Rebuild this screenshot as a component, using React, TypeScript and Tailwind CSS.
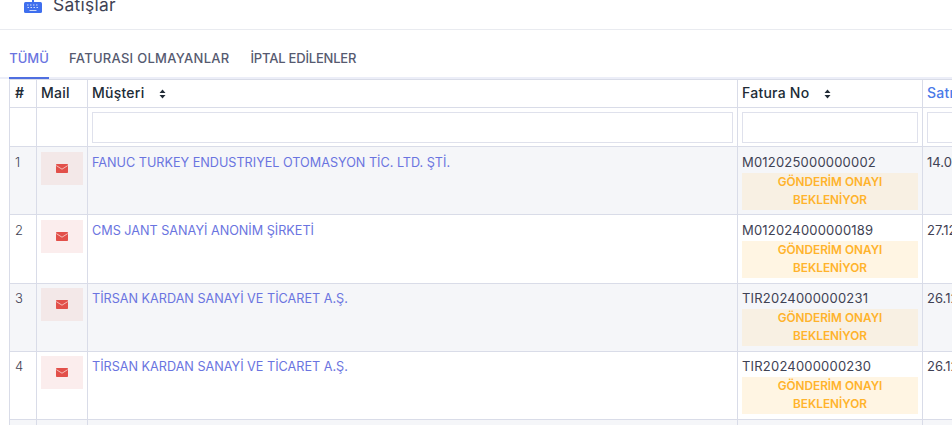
import React from "react";

const rows = [
  { id: 1, name: "FANUC TURKEY ENDUSTRIYEL OTOMASYON TİC. LTD. ŞTİ.", no: "M012025000000002", date: "14.01.2025", h: "h-[68px]", pad: "pt-[6px]", boxPad: "pt-[5px]" },
  { id: 2, name: "CMS JANT SANAYİ ANONİM ŞİRKETİ", no: "M012024000000189", date: "27.12.2024", h: "h-[69px]", pad: "pt-[6px]", boxPad: "pt-[5px]" },
  { id: 3, name: "TİRSAN KARDAN SANAYİ VE TİCARET A.Ş.", no: "TIR2024000000231", date: "26.12.2024", h: "h-[68px]", pad: "pt-[5px]", boxPad: "pt-1" },
  { id: 4, name: "TİRSAN KARDAN SANAYİ VE TİCARET A.Ş.", no: "TIR2024000000230", date: "26.12.2024", h: "h-[68px]", pad: "pt-[5px]", boxPad: "pt-1" },
];

function SortIcon() {
  return (
    <svg width="7" height="10" viewBox="0 0 7 10" className="ml-[15px] inline-block">
      <path d="M3.5 0.5 L6.5 4 H0.5 Z M3.5 9.5 L6.5 6 H0.5 Z" fill="#212b36" />
    </svg>
  );
}

function KeyboardIcon() {
  return (
    <svg width="18" height="15" viewBox="0 0 18 15" className="mt-[-2px]">
      <rect x="0" y="4" width="18" height="11" rx="1.5" fill="#3f6fee" />
      <rect x="8" y="0" width="2" height="5" fill="#3f6fee" />
      <path d="M3 7h1.5M6 7h1.5M9 7h1.5M12 7h1.5M3.5 9.5h1.5M6.5 9.5h1.5M9.5 9.5h1.5M12.5 9.5h1.5M5.5 12.5h7" stroke="#cfdcf9" strokeWidth="1.2" />
    </svg>
  );
}

function MailIcon() {
  return (
    <svg width="12" height="9" viewBox="0 0 12 9">
      <rect width="12" height="9" rx="0.8" fill="#e2504a" />
      <path d="M0.3 1.6 L6 5.2 L11.7 1.6" fill="none" stroke="#fbe9e7" strokeWidth="0.7" />
    </svg>
  );
}

const cell = "border-r border-b border-[#d9dce8] align-top";

export default function App() {
  return (
    <div className="h-[425px] w-[952px] overflow-hidden bg-white font-['Inter','Open_Sans',sans-serif] text-[#212b36]">
      <div className="flex h-[30px] items-start gap-[11px] overflow-hidden border-b border-[#e9ebf0] pl-6">
        <KeyboardIcon />
        <span className="mt-[-7px] text-[17.4px] leading-6 tracking-[0.3px] text-[#3f4254]">Satışlar</span>
      </div>

      {/* tabs */}
      <div className="mt-[13px] flex h-[36px] border-b-2 border-[#eceef8] pl-[9px] text-[13px] font-medium">
        <div className="mb-[-2px] h-[36px] w-10 border-b-2 border-[#4f6fe0] pt-[6px] text-center text-[#6a74e0]">TÜMÜ</div>
        <div className="ml-5 pt-[6px] tracking-[0.28px] text-[#565a70]">FATURASI OLMAYANLAR</div>
        <div className="ml-[21px] pt-[6px] tracking-[-0.2px] text-[#565a70]">İPTAL EDİLENLER</div>
      </div>

      <div className="ml-[9px]">
        <table className="w-[1100px] table-fixed border-separate border-spacing-0 border-l border-[#d9dce8] text-[13px]">
          <colgroup>
            <col className="w-[27px]" />
            <col className="w-[51px]" />
            <col className="w-[650px]" />
            <col className="w-[185px]" />
            <col />
          </colgroup>
          <thead>
            <tr className="h-[29px] text-left text-[14px] font-medium tracking-[0.25px] text-[#212b36]">
              <th className={`${cell} border-t px-[5px] font-semibold`}><div className="pt-[2px]">#</div></th>
              <th className={`${cell} border-t pl-1 font-medium`}><div className="pt-[2px]">Mail</div></th>
              <th className={`${cell} border-t pl-1 font-medium`}><div className="pt-[2px]">Müşteri<SortIcon /></div></th>
              <th className={`${cell} border-t pl-1 font-medium`}><div className="pt-[2px]">Fatura No<SortIcon /></div></th>
              <th className={`${cell} border-t pl-1 font-medium text-[#4a7ae8]`}><div className="pt-[2px]">Satış Tarihi</div></th>
            </tr>
            <tr className="h-[39px]">
              <td className={cell} />
              <td className={cell} />
              <td className={`${cell} px-1 pt-1`}><div className="h-[31px] border border-[#dfe1ec] bg-white" /></td>
              <td className={`${cell} px-1 pt-1`}><div className="h-[31px] border border-[#dfe1ec] bg-white" /></td>
              <td className={`${cell} px-1 pt-1`}><div className="h-[31px] border border-[#dfe1ec] bg-white" /></td>
            </tr>
          </thead>
          <tbody>
            {rows.map((r) => {
              const odd = r.id % 2 === 1;
              return (
                <tr key={r.id} className={`${r.h} ${odd ? "bg-[#f5f6f9]" : "bg-white"}`}>
                  <td className={`${cell} ${r.pad} pl-[5px] font-light text-[#3f4254]`}>{r.id}</td>
                  <td className={`${cell} ${r.boxPad} pl-1`}>
                    <div className={`flex h-[33px] w-[42px] items-center justify-center ${odd ? "bg-[#f3e8e8]" : "bg-[#fbeded]"}`}>
                      <MailIcon />
                    </div>
                  </td>
                  <td className={`${cell} ${r.pad} pl-1 text-[12.65px] leading-[19px] text-[#6a74e0]`}>{r.name}</td>
                  <td className={`${cell} ${r.pad} pl-1 text-[#3f4254]`}>
                    <div className="leading-[19px] tracking-[0.2px]">{r.no}</div>
                    <div className={`mr-[4px] mt-[1px] flex h-[37px] flex-col items-center justify-center pb-[2px] text-[11.8px] font-semibold leading-[18px] text-[#ffb32c] ${odd ? "bg-[#f8f0e3]" : "bg-[#fff5e3]"}`}>
                      <span>GÖNDERİM ONAYI</span>
                      <span>BEKLENİYOR</span>
                    </div>
                  </td>
                  <td className={`${cell} ${r.pad} pl-1 text-[#3f4254]`}>{r.date}</td>
                </tr>
              );
            })}
            <tr className="h-[20px] bg-[#f5f6f9]">
              <td className={cell} />
              <td className={cell} />
              <td className={cell} />
              <td className={cell} />
              <td className={cell} />
            </tr>
          </tbody>
        </table>
      </div>
    </div>
  );
}
